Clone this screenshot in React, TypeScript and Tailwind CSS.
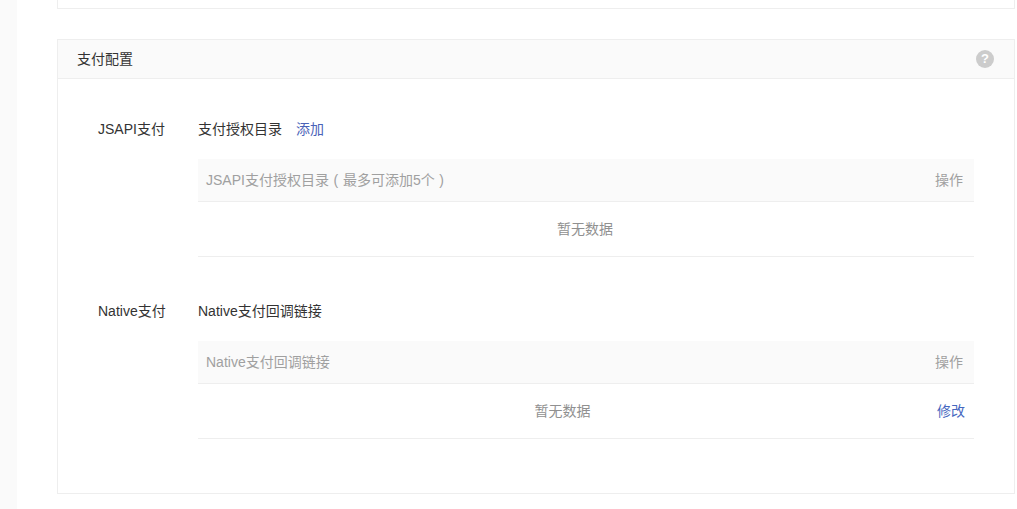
const font = { fontFamily: '"Liberation Sans", "Noto Sans CJK SC", sans-serif' };

function Section({ label, title, link, head, action }: { label: string; title: string; link?: string; head: React.ReactNode; action?: string }) {
  return (
    <div className="flex pl-[40px] pr-[40px]">
      <div className="w-[100px] shrink-0 leading-[20px] text-[#333]">{label}</div>
      <div className="flex-1 min-w-0">
        <div className="flex h-[20px] items-center leading-[20px] text-[#333]">
          <span>{title}</span>
          {link && <a className="ml-[14px] text-[#4a62b8]">{link}</a>}
        </div>
        <div className="mt-[20px] flex h-[43px] items-center justify-between border-b border-[#eeeeee] bg-[#fafafa] pl-[8px] pr-[11px] text-[#a0a0a0]">
          <span>{head}</span>
          <span>操作</span>
        </div>
        <div className="flex h-[55px] items-center border-b border-[#eeeeee] text-[#909090]">
          {action ? (
            <>
              <span className="flex-1 text-center">暂无数据</span>
              <span className="w-[47px] pr-[9px] text-right text-[#4668bf]">{action}</span>
            </>
          ) : (
            <span className="flex-1 pr-[2px] text-center">暂无数据</span>
          )}
        </div>
      </div>
    </div>
  );
}

export default function App() {
  return (
    <div className="flex h-[509px] w-[1017px] overflow-hidden bg-white text-[14px]" style={font}>
      <div className="w-[17px] shrink-0 bg-[#fafafa]" />
      <div className="flex-1 pl-[40px] pr-[2px]">
        <div className="h-[9px] border-x border-b border-[#eeeeee]" />
        <div className="mt-[30px] h-[455px] border border-[#eeeeee]">
          <div className="flex h-[39px] items-center justify-between border-b border-[#eeeeee] bg-[#fafafa] pl-[19px] pr-[20px] text-[#333]">
            <span>支付配置</span>
            <span className="flex h-[18px] w-[18px] items-center justify-center rounded-full bg-[#cccccc] text-[13px] font-bold text-white">?</span>
          </div>
          <div className="flex flex-col gap-[44px] pt-[40px]">
            <Section label="JSAPI支付" title="支付授权目录" link="添加" head={<>JSAPI支付授权目录<span className="inline-block w-[14px] text-center">(</span>最多可添加5个<span className="inline-block w-[14px] text-center">)</span></>} />
            <Section label="Native支付" title="Native支付回调链接" head="Native支付回调链接" action="修改" />
          </div>
        </div>
      </div>
    </div>
  );
}
